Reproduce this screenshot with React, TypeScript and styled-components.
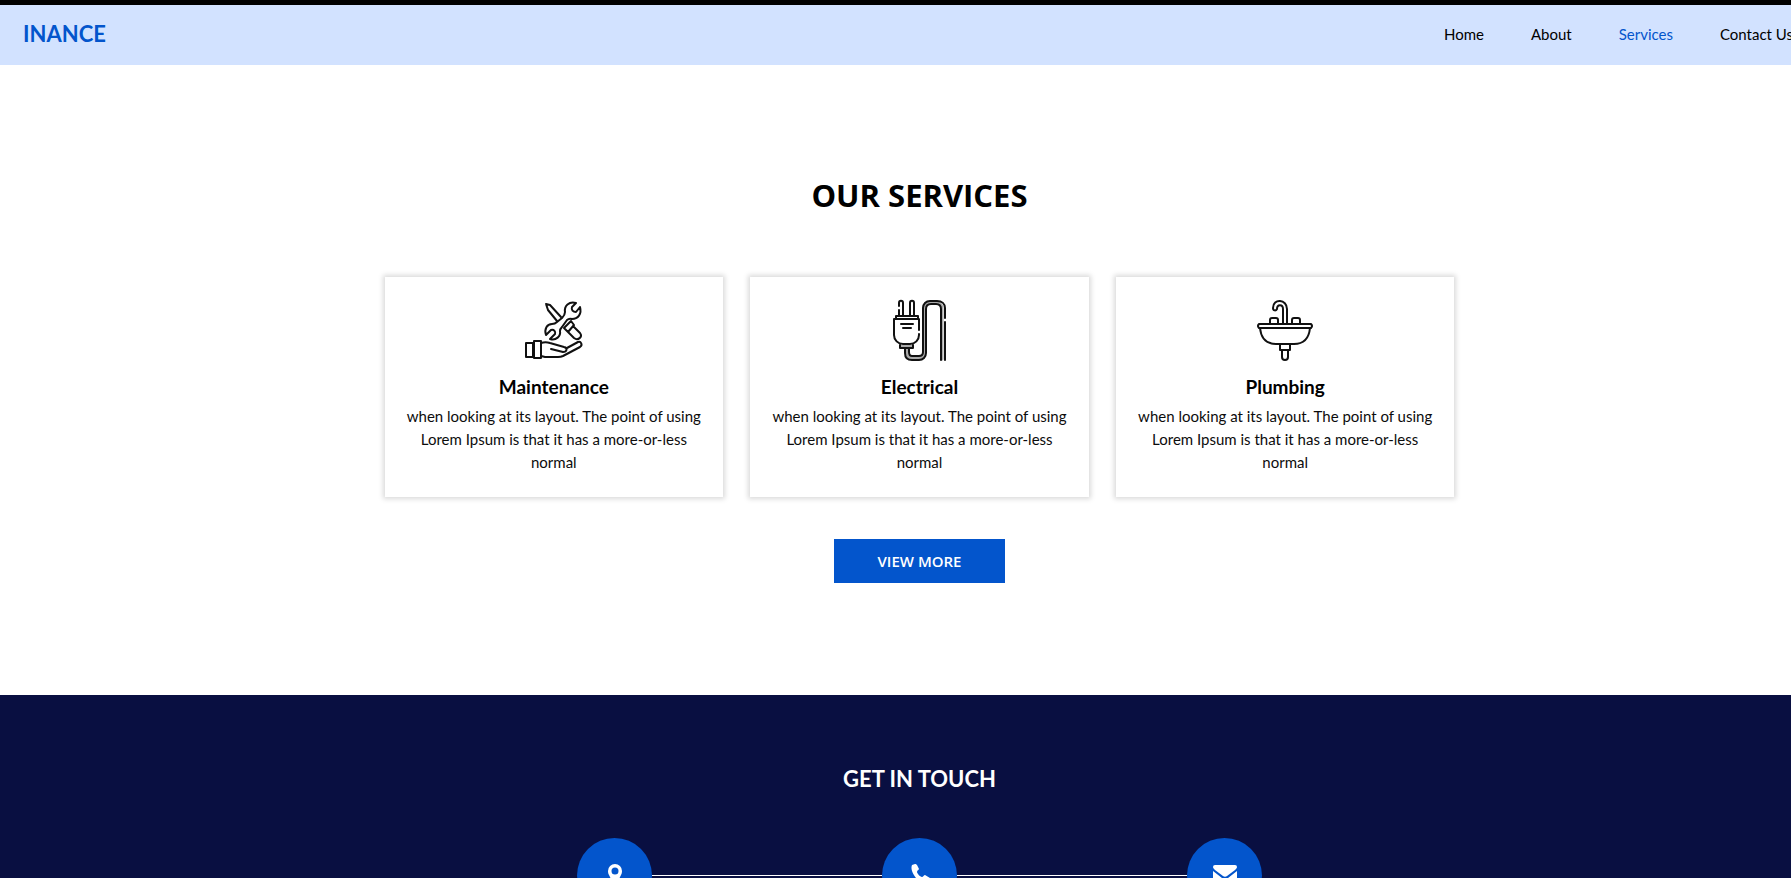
import React from "react";
import styled, { createGlobalStyle } from "styled-components";

const GlobalStyle = createGlobalStyle`
  * { box-sizing: border-box; }
  html, body { margin: 0; overflow: hidden; }
  body { font-family: Lato, sans-serif; font-size: 16px; line-height: 24px; color: #0c0c0c; background: #fff; }
  h1, h2, h3, p { margin: 0; }
`;

/* The page runs 48px past the right edge of the window. */
const Page = styled.div`
  width: calc(100% + 48px);
`;

const TopStrip = styled.div`
  height: 5px;
  background: #000;
`;

const Header = styled.header`
  display: flex;
  align-items: center;
  justify-content: space-between;
  min-height: 60px;
  padding: 0 46px 2px 23px;
  background: #d2e2ff;
`;

const Brand = styled.a`
  font-size: 22px;
  line-height: 32px;
  font-weight: 700;
  color: #0355cc;
  text-decoration: none;
`;

const Nav = styled.nav`
  display: flex;
  gap: 47px;
`;

const NavLink = styled.a<{ $active?: boolean }>`
  font-size: 15px;
  color: ${(p) => (p.$active ? "#0355cc" : "#000")};
  text-decoration: none;
`;

const Services = styled.section`
  display: flex;
  flex-direction: column;
  align-items: center;
  padding: 111px 0 112px;
`;

const Heading = styled.h1`
  font-family: "Open Sans", sans-serif;
  font-size: 31px;
  line-height: 38px;
  font-weight: 700;
  color: #000;
`;

const Cards = styled.div`
  display: grid;
  grid-template-columns: repeat(3, 1fr);
  gap: 27px;
  width: 100%;
  max-width: 1070px;
  margin: 63px 0 42px;
`;

const Card = styled.article`
  display: flex;
  flex-direction: column;
  align-items: center;
  padding: 22px 20px 23px;
  text-align: center;
  background: #fff;
  box-shadow: 0 0 5px 2px rgba(0, 0, 0, 0.15);
`;

const CardIcon = styled.svg`
  width: 64px;
  height: 64px;
  fill: none;
  stroke: #111;
  stroke-width: 2;
  stroke-linejoin: round;
  stroke-linecap: round;
`;

const CardTitle = styled.h2`
  margin: 12px 0 7px;
  font-size: 19px;
  line-height: 23px;
  font-weight: 700;
  color: #000;
`;

const CardText = styled.p`
  font-size: 15px;
  line-height: 23px;
`;

const MoreButton = styled.button`
  min-width: 171px;
  padding: 10px 40px;
  border: 0;
  font-family: "Open Sans", sans-serif;
  font-size: 15px;
  line-height: 24px;
  font-weight: 600;
  color: #fff;
  background: #0355cc;
`;

const Contact = styled.section`
  display: flex;
  flex-direction: column;
  align-items: center;
  gap: 44px;
  padding: 69px 0;
  background: #090f41;
`;

const ContactHeading = styled.h2`
  font-size: 22px;
  line-height: 30px;
  font-weight: 700;
  color: #fff;
`;

const ContactRow = styled.div`
  display: flex;
  align-items: center;
  width: 100%;
  max-width: 685px;
`;

const Connector = styled.span`
  flex: 1;
  height: 1px;
  background: #fff;
`;

const ContactLink = styled.a`
  display: flex;
  align-items: center;
  justify-content: center;
  width: 75px;
  height: 75px;
  border-radius: 50%;
  background: #0355cc;
`;

const ContactIcon = styled.svg`
  width: 24px;
  height: 24px;
  fill: #fff;
`;

const MaintenanceIcon = () => (
  <CardIcon viewBox="0 0 64 64" aria-hidden="true">
    <path d="M4 44h7v14H4zM12 42h7v17h-7z" />
    <path d="M19 44c3-1 6-1 9 0l14 4c4 1 3 5-1 5l-12-3M45 49l11-6c3-1 5 3 2 5L41 57c-2 1-3 1-5 1H23l-4-1" />
    <path d="M54 4C47 2 42 7 43 13Q43 16 40 19L35 23Q33 25 30 25C25 25 22 30 24 36L29 31C32 30 34 33 33 35L28 40C34 42 39 37 38 32Q38 30 40 28L45 21Q47 19 50 20C56 20 60 15 58 8L54 13C51 13 49 11 50 8Z" />
    <path d="M24 5l4 1 11 12M24 5l2 6 9 11M42 29l7-7 3 4-6 7zM51 27l7 7c3 4-2 8-6 5l-6-6" />
  </CardIcon>
);

const ElectricalIcon = () => (
  <CardIcon viewBox="0 0 64 64" aria-hidden="true">
    <path stroke="#aaa" strokeWidth="3" d="M20 50v4q0 5 5 5h7q5 0 5-5V10q0-6 6-6h6q6 0 6 6v50M14 47h11" />
    <path d="M12 7V4c0-3 4-3 4 0v12M12 11v5M23 16V4c0-3 4-3 4 0v12M9 20v-3h22v3M32 31V20H7v16c0 5 4 9 9 9h7c5 0 9-4 9-9v-1M13 46v3h13v-3M14 25h12M16 29h8" />
    <path d="M18 50v4c0 5 3 7 7 7h7c4 0 7-3 7-7V10c0-3 2-5 5-5h5c3 0 5 2 5 5v51M22 50v3c0 3 1 4 3 4h7c2 0 4-1 4-4V9c0-4 3-7 7-7h7c5 0 8 3 8 7v10M58 23v38" />
  </CardIcon>
);

const PlumbingIcon = () => (
  <CardIcon viewBox="0 0 64 64" aria-hidden="true">
    <path d="M6 25h52q2 2 0 4H6q-2-2 0-4zM7 29c1 10 6 16 16 16h18c10 0 15-6 16-16M17 24v-3c0-2 1-2 2-2h4c2 0 2 1 2 2v3M39 24v-3c0-2 1-2 2-2h4c2 0 2 1 2 2v3" />
    <path d="M30 24V10c0-5-6-5-6 0-1 2-4 2-4-1 0-10 14-9 14 1v14M27 45h10v6H27zM29 51v7c0 4 6 4 6 0v-7" />
  </CardIcon>
);

const services = [
  { title: "Maintenance", Icon: MaintenanceIcon },
  { title: "Electrical", Icon: ElectricalIcon },
  { title: "Plumbing", Icon: PlumbingIcon },
];

export default function App() {
  return (
    <Page>
      <GlobalStyle />
      <TopStrip />
      <Header>
        <Brand href="#">INANCE</Brand>
        <Nav>
          <NavLink href="#">Home</NavLink>
          <NavLink href="#">About</NavLink>
          <NavLink href="#" $active>Services</NavLink>
          <NavLink href="#">Contact Us</NavLink>
        </Nav>
      </Header>
      <Services>
        <Heading>OUR SERVICES</Heading>
        <Cards>
          {services.map(({ title, Icon }) => (
            <Card key={title}>
              <Icon />
              <CardTitle>{title}</CardTitle>
              <CardText>
                when looking at its layout. The point of using Lorem Ipsum is that it has a more-or-less normal
              </CardText>
            </Card>
          ))}
        </Cards>
        <MoreButton>VIEW MORE</MoreButton>
      </Services>
      <Contact>
        <ContactHeading>GET IN TOUCH</ContactHeading>
        <ContactRow>
          <ContactLink href="#" aria-label="Location">
            <ContactIcon viewBox="0 0 24 24">
              <path fillRule="evenodd" d="M12 0a7 7 0 0 0-7 7c0 2 .5 3 1 4l5 10c.5 1 1.500 1 2 0l5-10c.5-1 1-2 1-4a7 7 0 0 0-7-7zm0 3.500a3.500 3.500 0 1 1 0 7 3.500 3.500 0 0 1 0-7z" />
            </ContactIcon>
          </ContactLink>
          <Connector />
          <ContactLink href="#" aria-label="Phone">
            <ContactIcon viewBox="0 0 24 24">
              <path d="M7 0 4 1C1 8 12 22 20 19c2-1 2-3 2-5l-5-3c-1 0-2 2-3 2-2 0-5-4-5-5 0-2 2-2 2-3L9 1C8 0 8 0 7 0z" />
            </ContactIcon>
          </ContactLink>
          <Connector />
          <ContactLink href="#" aria-label="Email">
            <ContactIcon viewBox="0 0 24 24">
              <path d="M2 1h20a2 2 0 0 1 2 2c0 1-1 2-2 3l-8 6c-1 1-3 1-4 0L2 6C1 5 0 4 0 3a2 2 0 0 1 2-2z" />
              <path d="M0 7l9 7c2 1 4 1 6 0l9-7v11a2 2 0 0 1-2 2H2a2 2 0 0 1-2-2z" />
            </ContactIcon>
          </ContactLink>
        </ContactRow>
      </Contact>
    </Page>
  );
}
